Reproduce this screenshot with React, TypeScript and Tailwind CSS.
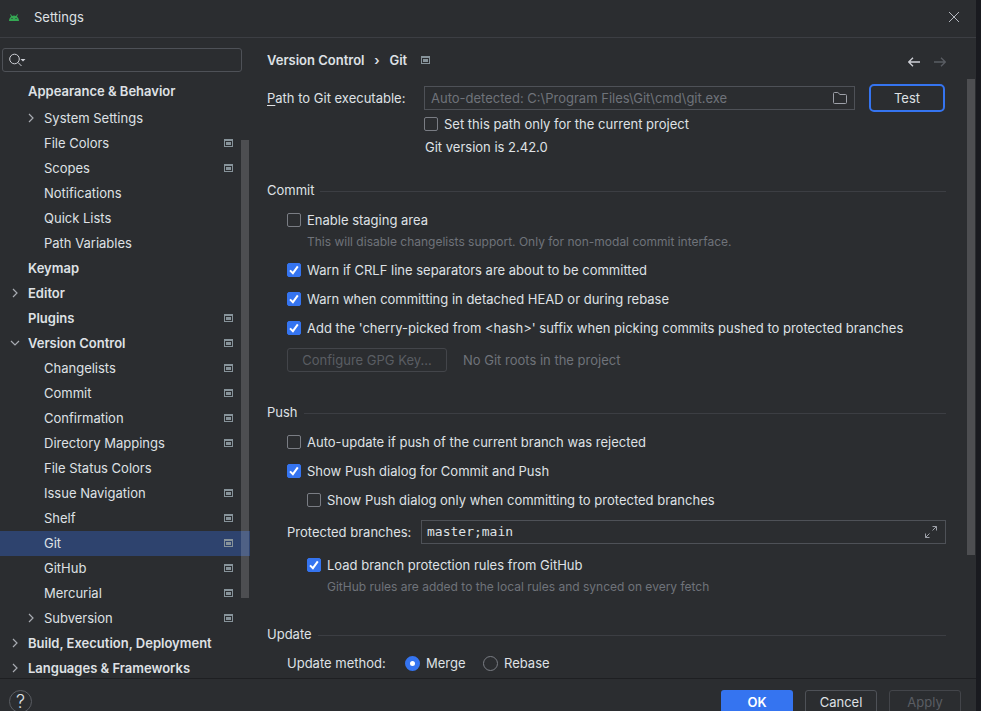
import { useState } from "react";
import type { ReactNode } from "react";

type TreeItem = {
  label: string;
  level: 0 | 1;
  arrow?: "right" | "down";
  project?: boolean;
};

const treeItems: TreeItem[] = [
  { label: "System Settings", level: 1, arrow: "right" },
  { label: "File Colors", level: 1, project: true },
  { label: "Scopes", level: 1, project: true },
  { label: "Notifications", level: 1 },
  { label: "Quick Lists", level: 1 },
  { label: "Path Variables", level: 1 },
  { label: "Keymap", level: 0 },
  { label: "Editor", level: 0, arrow: "right" },
  { label: "Plugins", level: 0, project: true },
  { label: "Version Control", level: 0, arrow: "down", project: true },
  { label: "Changelists", level: 1, project: true },
  { label: "Commit", level: 1, project: true },
  { label: "Confirmation", level: 1, project: true },
  { label: "Directory Mappings", level: 1, project: true },
  { label: "File Status Colors", level: 1 },
  { label: "Issue Navigation", level: 1, project: true },
  { label: "Shelf", level: 1, project: true },
  { label: "Git", level: 1, project: true },
  { label: "GitHub", level: 1, project: true },
  { label: "Mercurial", level: 1, project: true },
  { label: "Subversion", level: 1, arrow: "right", project: true },
  { label: "Build, Execution, Deployment", level: 0, arrow: "right" },
  { label: "Languages & Frameworks", level: 0, arrow: "right" },
];

function ProjectIcon() {
  return (
    <svg width="9" height="9" viewBox="0 0 9 9" fill="#87939a" className="shrink-0" aria-hidden="true">
      <path fillRule="evenodd" d="M0 0h9v8H0zM1 2v5h7V2z" />
      <path d="M2 3h5v3H2z" />
    </svg>
  );
}

function Arrow({ direction }: { direction: "right" | "down" }) {
  return (
    <svg
      width="10"
      height="11"
      viewBox="0 0 10 11"
      fill="none"
      stroke="#a8abb2"
      strokeWidth="1.2"
      className="shrink-0"
      aria-hidden="true"
    >
      <path d={direction === "right" ? "M3 1l4 4-4 4" : "M1 3l4 4 4-4"} />
    </svg>
  );
}

function Check({
  label,
  defaultChecked = false,
  className = "",
}: {
  label: string;
  defaultChecked?: boolean;
  className?: string;
}) {
  return (
    <label className={`flex h-[29px] items-center gap-1.5 ${className}`}>
      <span className="relative mb-px grid size-3.5 shrink-0 place-items-center">
        <input
          type="checkbox"
          defaultChecked={defaultChecked}
          className="peer size-3.5 appearance-none rounded-[2px] border border-[#7a7d84] checked:border-[#3574f0] checked:bg-[#3574f0]"
        />
        <svg
          width="14"
          height="14"
          viewBox="0 0 14 14"
          fill="none"
          stroke="white"
          strokeWidth="2"
          className="pointer-events-none absolute inset-0 hidden peer-checked:block"
          aria-hidden="true"
        >
          <path d="M3 7.4l2.9 2.8L10.8 3.4" />
        </svg>
      </span>
      <span className="whitespace-nowrap">{label}</span>
    </label>
  );
}

function Radio({ label, defaultChecked = false }: { label: string; defaultChecked?: boolean }) {
  return (
    <label className="flex w-[78px] items-center gap-1.5">
      <input
        type="radio"
        name="update-method"
        defaultChecked={defaultChecked}
        className="size-[15px] appearance-none rounded-full border border-[#7a7d84] checked:border-5 checked:border-[#3574f0] checked:bg-white"
      />
      {label}
    </label>
  );
}

function Hint({ className, children }: { className: string; children: ReactNode }) {
  return <p className={`h-[21px] text-xs leading-[14px] text-[#6f737a] ${className}`}>{children}</p>;
}

function SectionTitle({ children }: { children: ReactNode }) {
  return (
    <h2 className="mb-1.5 flex h-5 items-center gap-1.5">
      {children}
      <span className="mt-0.5 h-px flex-1 bg-[#3c3e43]" />
    </h2>
  );
}

function Sidebar() {
  const [selected, setSelected] = useState("Git");

  return (
    <aside className="flex w-[250px] shrink-0 flex-col overflow-hidden">
      <div className="mt-2.5 mr-2 ml-0.5 flex h-6 shrink-0 items-center rounded-[3px] border border-[#4e5157] pl-1.5">
        <svg width="17" height="14" viewBox="0 0 17 14" fill="none" stroke="#ced0d6" className="shrink-0" aria-hidden="true">
          <circle cx="5.5" cy="6" r="4.800" />
          <path d="M9 9.500l3.500 3.500" />
          <path d="M11.500 6h5L14 8.500z" fill="#ced0d6" stroke="none" />
        </svg>
        <input type="text" aria-label="Search settings" className="min-w-0 flex-1 bg-transparent px-1 outline-none" />
      </div>

      <div className="mt-1 flex h-[30px] shrink-0 items-center pl-7 font-semibold">Appearance &amp; Behavior</div>

      <div className="relative min-h-0 flex-1 overflow-hidden">
        <ul>
          {treeItems.map((item) => (
            <li key={item.label}>
              <button
                type="button"
                onClick={() => setSelected(item.label)}
                className={`flex h-[25px] w-full items-center gap-2 pr-[17px] text-left leading-[19px] whitespace-nowrap ${
                  item.level === 0 ? "pl-2.5 font-semibold" : "pl-[26px]"
                } ${item.label === selected ? "bg-[#2e436e]" : ""}`}
              >
                {item.arrow ? <Arrow direction={item.arrow} /> : <span className="w-2.5 shrink-0" />}
                <span className="flex-1">{item.label}</span>
                {item.project && <ProjectIcon />}
              </button>
            </li>
          ))}
        </ul>
        <div className="absolute top-[34px] right-px h-[458px] w-2 bg-white/16" />
      </div>
    </aside>
  );
}

function GitSettings() {
  return (
    <div className="pt-[5px] pr-[30px] pl-[17px]">
      <div className="flex h-7 items-center pr-px">
        <label htmlFor="git-path" className="w-[157px] shrink-0">
          <span className="underline underline-offset-2">P</span>ath to Git executable:
        </label>
        <div className="mr-3.5 flex h-6 min-w-0 flex-1 items-center border border-[#4e5157] pr-1.5">
          <input
            id="git-path"
            type="text"
            placeholder="Auto-detected: C:\Program Files\Git\cmd\git.exe"
            className="h-5 min-w-0 flex-1 bg-transparent pl-1.5 outline-none placeholder:text-[#6f737a]"
          />
          <button type="button" aria-label="Browse">
            <svg width="16" height="14" viewBox="0 0 16 14" fill="none" stroke="#9da0a8" aria-hidden="true">
              <path d="M1.5 2.5a1 1 0 0 1 1-1h3.3l2.2 2h5.5a1 1 0 0 1 1 1v7a1 1 0 0 1-1 1h-11a1 1 0 0 1-1-1z" />
            </svg>
          </button>
        </div>
        <button type="button" className="h-7 w-[76px] rounded-[5px] border-2 border-[#3574f0]">
          Test
        </button>
      </div>
      <div className="pl-[157px]">
        <Check label="Set this path only for the current project" className="h-[25px]! leading-[19px]" />
        <p className="flex h-[21px] items-center pl-px leading-[19px]">Git version is 2.42.0</p>
      </div>

      <section className="mt-[22px]">
        <SectionTitle>Commit</SectionTitle>
        <div className="pl-5">
          <Check label="Enable staging area" className="leading-[19px]" />
          <Hint className="pl-5">This will disable changelists support. Only for non-modal commit interface.</Hint>
          <Check label="Warn if CRLF line separators are about to be committed" defaultChecked className="leading-[19px]" />
          <Check label="Warn when committing in detached HEAD or during rebase" defaultChecked className="leading-[19px]" />
          <Check
            label="Add the 'cherry-picked from <hash>' suffix when picking commits pushed to protected branches"
            defaultChecked
            className="leading-[19px]"
          />
          <div className="mt-[5px] flex h-6 items-center gap-4 text-[#6f737a]">
            <button type="button" disabled className="h-6 w-40 rounded-[3px] border border-[#43454a] text-[#5a5d63]">
              Configure GPG Key...
            </button>
            <span>No Git roots in the project</span>
          </div>
        </div>
      </section>

      <section className="mt-[30px]">
        <SectionTitle>Push</SectionTitle>
        <div className="pl-5">
          <Check label="Auto-update if push of the current branch was rejected" className="leading-[19px]" />
          <Check label="Show Push dialog for Commit and Push" defaultChecked className="leading-[19px]" />
          <Check label="Show Push dialog only when committing to protected branches" className="pl-5 leading-[19px]" />
          <div className="mt-[5px] mb-[7px] flex h-6 items-center">
            <label htmlFor="branches" className="w-[134px] shrink-0">
              Protected branches:
            </label>
            <div className="flex h-6 min-w-0 flex-1 items-center border border-[#4e5157] pr-2">
              <input
                id="branches"
                type="text"
                defaultValue="master;main"
                className="h-5 min-w-0 flex-1 bg-transparent pl-[5px] font-['DejaVu_Sans_Mono',monospace] outline-none"
              />
              <button type="button" aria-label="Expand">
                <svg width="12" height="12" viewBox="0 0 12 12" fill="none" stroke="#9da0a8" aria-hidden="true">
                  <path d="M7.5.5h4v4M11.5.5l-4 4M.5 7.5v4h4M.5 11.5l4-4" />
                </svg>
              </button>
            </div>
          </div>
          <Check label="Load branch protection rules from GitHub" defaultChecked className="pl-5 leading-[19px]" />
          <Hint className="pl-10">GitHub rules are added to the local rules and synced on every fetch</Hint>
        </div>
      </section>

      <section className="mt-[23px]">
        <SectionTitle>Update</SectionTitle>
        <div className="flex h-[27px] items-center pl-5 leading-[19px]">
          <span className="w-[118px]">Update method:</span>
          <Radio label="Merge" defaultChecked />
          <Radio label="Rebase" />
        </div>
      </section>
    </div>
  );
}

export default function App() {
  return (
    <div className="flex h-screen overflow-hidden bg-[#191a1f] pr-[5px] font-[Inter,sans-serif] text-[13px] leading-5 text-[#dfe1e5]">
      <div className="flex min-w-0 flex-1 flex-col bg-[#2b2d30]">
        <header className="flex h-[38px] shrink-0 items-center border-b border-[#3c3e43] pr-4 pb-[3px] pl-[9px]">
          <svg width="10" height="7" viewBox="0 0 10 7" className="mr-[15px] shrink-0" aria-hidden="true">
            <path d="M0 7c0-2 .8-3.500 2-4.300L1.200.4l.6-.4L3 2a5 5 0 0 1 4 0L8.200 0l.6.4L8 2.700C9.200 3.500 10 5 10 7z" fill="#34a853" />
            <path d="M2.500 4h1v1h-1zM6.500 4h1v1h-1z" fill="#2b2d30" />
          </svg>
          <h1 className="flex-1">Settings</h1>
          <button type="button" aria-label="Close">
            <svg width="12" height="12" viewBox="0 0 12 12" fill="none" stroke="#b4b8bf" aria-hidden="true">
              <path d="M1 1l10 10M11 1L1 11" />
            </svg>
          </button>
        </header>

        <div className="flex min-h-0 flex-1">
          <Sidebar />
          <main className="flex min-w-0 flex-1 flex-col">
            <div className="flex h-[41px] shrink-0 items-center pt-1 pr-[30px] pl-[17px] leading-[19px]">
              <nav aria-label="Breadcrumb" className="flex flex-1 items-center font-semibold">
                <a href="#version-control">Version Control</a>
                <span className="w-[25px] text-center">›</span>
                <span className="mr-3.5">Git</span>
                <ProjectIcon />
              </nav>
              <div className="flex gap-3.5 pt-0.5">
                <button type="button" aria-label="Back">
                  <svg width="12" height="10" viewBox="0 0 12 10" fill="none" stroke="#ced0d6" strokeWidth="1.3" aria-hidden="true">
                    <path d="M12 5H1M5 .7L.7 5 5 9.300" />
                  </svg>
                </button>
                <button type="button" aria-label="Forward" disabled>
                  <svg width="12" height="10" viewBox="0 0 12 10" fill="none" stroke="#5a5d63" strokeWidth="1.3" aria-hidden="true">
                    <path d="M0 5h11M7 .7L11.300 5 7 9.300" />
                  </svg>
                </button>
              </div>
            </div>
            <div className="relative min-h-0 flex-1 overflow-hidden">
              <GitSettings />
              <div className="absolute top-0 right-px h-[476px] w-2 bg-[#4d4e51]" />
            </div>
          </main>
        </div>

        <footer className="flex h-[33px] shrink-0 items-start gap-3 overflow-hidden border-t border-[#1e1f22] pt-[11px] pr-[15px] pl-[9px]">
          <button
            type="button"
            aria-label="Help"
            className="mr-auto size-[23px] shrink-0 rounded-full border border-[#5a5d63] text-lg leading-5 font-light"
          >
            ?
          </button>
          <button type="button" className="h-6 w-[72px] shrink-0 rounded-[3px] bg-[#3574f0] font-semibold text-white">
            OK
          </button>
          <button type="button" className="h-6 w-[72px] shrink-0 rounded-[3px] border border-[#4e5157]">
            Cancel
          </button>
          <button type="button" disabled className="h-6 w-[72px] shrink-0 rounded-[3px] border border-[#43454a] text-[#5a5d63]">
            Apply
          </button>
        </footer>
      </div>
    </div>
  );
}
